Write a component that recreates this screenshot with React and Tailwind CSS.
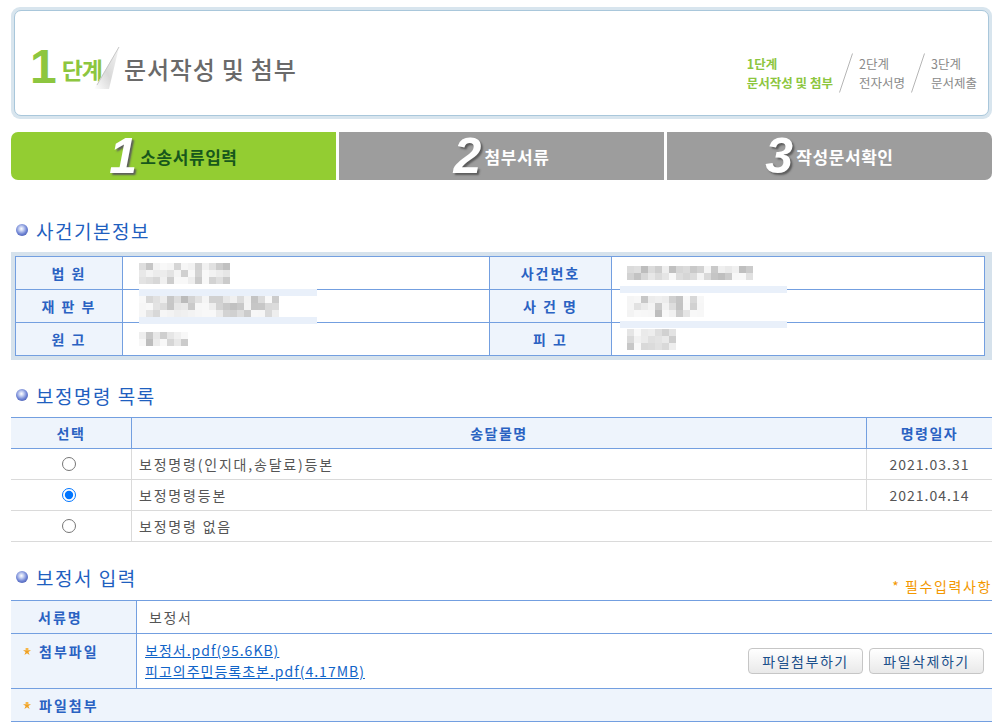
import React from 'react';

// deterministic pixel mosaic standing in for the redacted values
function Mosaic({ cols, rows, seed, size = 7 }) {
  let s = seed;
  const cells = [];
  for (let i = 0; i < cols * rows; i++) {
    s = (s * 9301 + 49297) % 233280;
    const r = s / 233280;
    const v = 248 - Math.floor(r * r * 62);
    cells.push(
      <span key={i} className="block" style={{ backgroundColor: `rgb(${v},${v},${v})`, width: size, height: size }} />
    );
  }
  return (
    <div className="grid" style={{ gridTemplateColumns: `repeat(${cols}, ${size}px)` }}>
      {cells}
    </div>
  );
}

function Bullet() {
  return (
    <span className="block w-[12px] h-[12px] rounded-full bg-[radial-gradient(circle_at_45%_40%,#ffffff_0%,#c9d3f3_22%,#6f84d4_55%,#2c409a_100%)]" />
  );
}

function SectionTitle({ children, right }) {
  return (
    <div className="h-[28px] flex items-center justify-between">
      <div className="flex items-center">
        <span className="ml-[5px]">
          <Bullet />
        </span>
        <h2 className="ml-[8px] text-[19px] leading-none text-[#1f5fbf] tracking-[1.5px]">{children}</h2>
      </div>
      {right}
    </div>
  );
}

function Star() {
  return (
    <svg width="8" height="7" viewBox="0 0 8 7" className="shrink-0">
      <path d="M0 2.2 L8 2.2 L5.4 4 L6.6 7 L4 5.2 L1.4 7 L2.6 4 Z" fill="#f0a020" />
      <rect x="2.6" y="0" width="2.8" height="2.4" fill="#f7b646" />
    </svg>
  );
}

function StepSlash() {
  return (
    <svg width="14" height="40" viewBox="0 0 14 40" className="mx-[6px]">
      <line x1="13.5" y1="0.5" x2="0.5" y2="39.5" stroke="#b5b5b5" strokeWidth="1" />
    </svg>
  );
}

function Tab({ num, label, active, rounded }) {
  return (
    <div
      className={
        'flex-1 flex items-center justify-center ' +
        rounded +
        (active ? ' bg-[#93cd32]' : ' bg-[#9d9d9d]')
      }
    >
      <span className="font-['Liberation_Sans',sans-serif] italic font-bold text-[50px] leading-none text-white [text-shadow:2px_2px_2px_#5c5c5c]">
        {num}
      </span>
      <span
        className={
          'ml-[3px] text-[17px] leading-none font-bold tracking-[0.6px]' +
          (active ? ' text-[#17581c]' : ' text-white')
        }
      >
        {label}
      </span>
    </div>
  );
}

const labelCell = 'bg-[#eef4fc] flex items-center justify-center text-[14px] font-bold text-[#2a62c2] tracking-[2px]';

function App() {
  return (
    <div className="min-h-screen bg-white font-['Noto_Sans_CJK_KR','Noto_Sans',sans-serif] text-[14px]">
      <div className="w-[981px] ml-[11px] pt-[7px] pb-[10px]">
        {/* step header */}
        <div className="h-[112px] rounded-[9px] bg-[#d8e5ee] p-[3px]">
          <div className="h-full rounded-[7px] border border-[#a9c7db] bg-white flex items-center justify-between pl-[15px] pr-[11px]">
            <div className="flex items-center mt-[8px]">
              <span className="font-['Liberation_Sans',sans-serif] font-bold text-[48px] leading-none text-[#8dc63f]">1</span>
              <span className="ml-[5px] mt-[4px] text-[23px] font-bold leading-none text-[#8dc63f] tracking-[-1px]">단계</span>
              <svg width="30" height="48" viewBox="0 0 30 48" className="-ml-[11px] mt-[4px]">
                <defs>
                  <linearGradient id="fold" x1="0" y1="1" x2="1" y2="0">
                    <stop offset="0" stopColor="#ffffff" />
                    <stop offset="0.45" stopColor="#d9d9d9" />
                    <stop offset="1" stopColor="#f4f4f4" />
                  </linearGradient>
                </defs>
                <path d="M28 2 L3 44 L18 44 Z" fill="url(#fold)" />
                <line x1="28" y1="2" x2="6" y2="40" stroke="#c8c8c8" strokeWidth="1" />
              </svg>
              <span className="ml-[3px] mt-[4px] text-[24px] font-medium leading-none text-[#6a6a6a] tracking-[0.8px]">문서작성 및 첨부</span>
            </div>
            <div className="flex items-center mt-[20px] text-[12.5px] leading-[19px]">
              <div className="text-[#8dc63f] font-bold">
                1단계
                <br />
                문서작성 및 첨부
              </div>
              <StepSlash />
              <div className="text-[#8a8a8a]">
                2단계
                <br />
                전자서명
              </div>
              <StepSlash />
              <div className="text-[#8a8a8a]">
                3단계
                <br />
                문서제출
              </div>
            </div>
          </div>
        </div>

        {/* tabs */}
        <div className="mt-[13px] flex gap-[3px] h-[48px]">
          <Tab num="1" label="소송서류입력" active rounded="rounded-l-[7px]" />
          <Tab num="2" label="첨부서류" rounded="" />
          <Tab num="3" label="작성문서확인" rounded="rounded-r-[7px]" />
        </div>

        {/* 사건기본정보 */}
        <div className="mt-[36px]">
          <SectionTitle>사건기본정보</SectionTitle>
        </div>
        <div className="mt-[8px] bg-[#d6e2ec] pl-[4px] pr-[7px] py-[4px]">
          <div className="relative border border-[#739fe0] bg-white">
            <div className="grid grid-cols-[106px_367px_122px_1fr] h-[32px]">
              <div className={labelCell}>법 원</div>
              <div className="border-l border-[#739fe0] flex items-center pl-[16px]">
                <Mosaic cols={13} rows={3} seed={11} />
              </div>
              <div className={'border-l border-[#739fe0] ' + labelCell}>사건번호</div>
              <div className="border-l border-[#739fe0] flex items-center pl-[15px]">
                <Mosaic cols={18} rows={2} seed={37} />
              </div>
            </div>
            <div className="grid grid-cols-[106px_367px_122px_1fr] h-[33px] border-t border-[#739fe0]">
              <div className={labelCell}>재 판 부</div>
              <div className="border-l border-[#739fe0] flex items-center pl-[16px]">
                <Mosaic cols={20} rows={3} seed={73} />
              </div>
              <div className={'border-l border-[#739fe0] ' + labelCell}>사 건 명</div>
              <div className="border-l border-[#739fe0] flex items-center pl-[15px]">
                <Mosaic cols={11} rows={3} seed={101} />
              </div>
            </div>
            <div className="grid grid-cols-[106px_367px_122px_1fr] h-[33px] border-t border-[#739fe0]">
              <div className={labelCell}>원 고</div>
              <div className="border-l border-[#739fe0] flex items-center pl-[16px]">
                <Mosaic cols={7} rows={2} seed={5} />
              </div>
              <div className={'border-l border-[#739fe0] ' + labelCell}>피 고</div>
              <div className="border-l border-[#739fe0] flex items-center pl-[15px]">
                <Mosaic cols={7} rows={3} seed={59} />
              </div>
            </div>
            {/* redaction strips lying over the grid lines */}
            <span className="absolute left-[123px] top-[32px] w-[178px] h-[7px] bg-[#e9f0fa]" />
            <span className="absolute left-[123px] top-[60px] w-[178px] h-[7px] bg-[#e9f0fa]" />
            <span className="absolute left-[604px] top-[29px] w-[167px] h-[7px] bg-[#e9f0fa]" />
            <span className="absolute left-[604px] top-[64px] w-[167px] h-[7px] bg-[#e9f0fa]" />
          </div>
        </div>

        {/* 보정명령 목록 */}
        <div className="mt-[21px]">
          <SectionTitle>보정명령 목록</SectionTitle>
        </div>
        <div className="mt-[8px] border-t border-[#739fe0]">
          <div className="grid grid-cols-[120px_735px_1fr] h-[31px] bg-[#eef4fc] border-b border-[#739fe0] text-[14px] font-bold text-[#2a62c2] tracking-[1.5px]">
            <div className="flex items-center justify-center">선택</div>
            <div className="border-l border-[#739fe0] flex items-center justify-center">송달물명</div>
            <div className="border-l border-[#739fe0] flex items-center justify-center">명령일자</div>
          </div>
          {[
            { name: '보정명령(인지대,송달료)등본', date: '2021.03.31', checked: false },
            { name: '보정명령등본', date: '2021.04.14', checked: true },
          ].map((row) => (
            <div key={row.name} className="grid grid-cols-[120px_735px_1fr] h-[31px] border-b border-[#dadada] text-[#555] tracking-[1.8px]">
              <div className="flex items-center justify-center">
                <input type="radio" name="bj" defaultChecked={row.checked} className="w-[14px] h-[14px] m-0 mr-[4px]" />
              </div>
              <div className="border-l border-[#dadada] flex items-center pl-[7px]">{row.name}</div>
              <div className="border-l border-[#dadada] flex items-center justify-center tracking-[1px]">{row.date}</div>
            </div>
          ))}
          <div className="grid grid-cols-[120px_1fr] h-[31px] border-b border-[#dadada] text-[#555] tracking-[1.8px]">
            <div className="flex items-center justify-center">
              <input type="radio" name="bj" className="w-[14px] h-[14px] m-0 mr-[4px]" />
            </div>
            <div className="border-l border-[#dadada] flex items-center pl-[7px]">보정명령 없음</div>
          </div>
        </div>

        {/* 보정서 입력 */}
        <div className="mt-[21px]">
          <SectionTitle
            right={<span className="self-end -mb-[2px] text-[14px] leading-none text-[#f39800] tracking-[1.6px]">* 필수입력사항</span>}
          >
            보정서 입력
          </SectionTitle>
        </div>
        <div className="mt-[9px] border-t border-[#739fe0]">
          <div className="grid grid-cols-[125px_1fr] h-[33px] border-b border-[#739fe0]">
            <div className="bg-[#eef4fc] flex items-center pl-[27px] font-bold text-[#2a62c2] tracking-[2px]">서류명</div>
            <div className="border-l border-[#739fe0] flex items-center pl-[12px] text-[#555] tracking-[1.6px]">보정서</div>
          </div>
          <div className="grid grid-cols-[125px_1fr] h-[55px] border-b border-[#739fe0]">
            <div className="bg-[#eef4fc] flex items-start pt-[10px] pl-[12px]">
              <span className="mt-[4px]">
                <Star />
              </span>
              <span className="ml-[8px] font-bold leading-none text-[#2a62c2] tracking-[2px]">첨부파일</span>
            </div>
            <div className="border-l border-[#739fe0] flex items-center justify-between pl-[8px] pr-[8px]">
              <div className="flex flex-col leading-[21px] tracking-[1px]">
                <a href="#" className="text-[#1164c8] underline">보정서.pdf(95.6KB)</a>
                <a href="#" className="text-[#1164c8] underline">피고의주민등록초본.pdf(4.17MB)</a>
              </div>
              <div className="flex gap-[6px]">
                <button className="w-[115px] h-[26px] rounded-[4px] border border-[#c6c6c6] bg-[linear-gradient(#ffffff,#e9e9e9)] text-[14px] text-[#1b4f8a] tracking-[1.5px]">
                  파일첨부하기
                </button>
                <button className="w-[115px] h-[26px] rounded-[4px] border border-[#c6c6c6] bg-[linear-gradient(#ffffff,#e9e9e9)] text-[14px] text-[#1b4f8a] tracking-[1.5px]">
                  파일삭제하기
                </button>
              </div>
            </div>
          </div>
          <div className="h-[33px] border-b border-[#739fe0] bg-[#eef4fc] flex items-center pl-[12px]">
            <Star />
            <span className="ml-[8px] font-bold leading-none text-[#2a62c2] tracking-[2px]">파일첨부</span>
          </div>
        </div>
      </div>
    </div>
  );
}

export default App;
